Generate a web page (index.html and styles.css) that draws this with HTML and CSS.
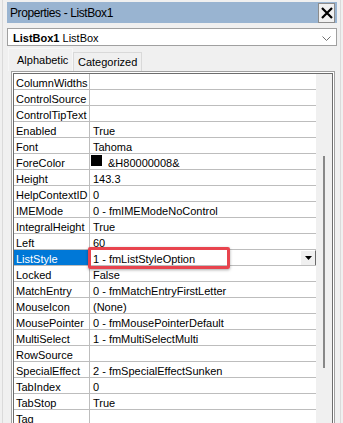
FILE: index.html
```html
<!DOCTYPE html>
<html lang="en">

<head>
    <meta charset="UTF-8">
    <meta name="viewport" content="width=device-width, initial-scale=1.0">
    <link rel="stylesheet" href="styles.css">
    <title>Properties - ListBox1</title>
</head>

<body>
    <div class="window">
        <div class="titlebar">
            <span class="title">Properties - ListBox1</span>
            <span class="close">
                <svg width="12" height="12" viewBox="0 0 12 12">
                    <path d="M1 1 L11 11 M11 1 L1 11" stroke="#000" stroke-width="2.2" fill="none" />
                </svg>
            </span>
        </div>

        <div class="combo">
            <span class="combo-text"><b>ListBox1</b> ListBox</span>
            <svg class="chevron" width="9" height="5" viewBox="0 0 9 5">
                <path d="M0.5 0.5 L4.5 4.5 L8.5 0.5" stroke="#707070" stroke-width="1" fill="none" />
            </svg>
        </div>

        <div class="tabs">
            <span class="tab active">Alphabetic</span>
            <span class="tab">Categorized</span>
        </div>

        <div class="grid">
            <div class="grid-inner">
                <div class="rows">
                    <div class="row"><span class="name">ColumnWidths</span><span class="value"></span></div>
                    <div class="row"><span class="name">ControlSource</span><span class="value"></span></div>
                    <div class="row"><span class="name">ControlTipText</span><span class="value"></span></div>
                    <div class="row"><span class="name">Enabled</span><span class="value">True</span></div>
                    <div class="row"><span class="name">Font</span><span class="value">Tahoma</span></div>
                    <div class="row"><span class="name">ForeColor</span><span class="value"><span class="swatch"></span>&amp;H80000008&amp;</span></div>
                    <div class="row"><span class="name">Height</span><span class="value">143.3</span></div>
                    <div class="row"><span class="name">HelpContextID</span><span class="value">0</span></div>
                    <div class="row"><span class="name">IMEMode</span><span class="value">0 - fmIMEModeNoControl</span></div>
                    <div class="row"><span class="name">IntegralHeight</span><span class="value">True</span></div>
                    <div class="row"><span class="name">Left</span><span class="value">60</span></div>
                    <div class="row selected">
                        <span class="name">ListStyle</span>
                        <span class="value">1 - fmListStyleOption
                            <span class="drop">
                                <svg width="7" height="4" viewBox="0 0 7 4"><path d="M0 0 L7 0 L3.5 4 Z" fill="#000" /></svg>
                            </span>
                        </span>
                    </div>
                    <div class="row"><span class="name">Locked</span><span class="value">False</span></div>
                    <div class="row"><span class="name">MatchEntry</span><span class="value">0 - fmMatchEntryFirstLetter</span></div>
                    <div class="row"><span class="name">MouseIcon</span><span class="value">(None)</span></div>
                    <div class="row"><span class="name">MousePointer</span><span class="value">0 - fmMousePointerDefault</span></div>
                    <div class="row"><span class="name">MultiSelect</span><span class="value">1 - fmMultiSelectMulti</span></div>
                    <div class="row"><span class="name">RowSource</span><span class="value"></span></div>
                    <div class="row"><span class="name">SpecialEffect</span><span class="value">2 - fmSpecialEffectSunken</span></div>
                    <div class="row"><span class="name">TabIndex</span><span class="value">0</span></div>
                    <div class="row"><span class="name">TabStop</span><span class="value">True</span></div>
                    <div class="row"><span class="name">Tag</span><span class="value"></span></div>

                    <div class="callout"></div>
                </div>
                <div class="scroll">
                    <div class="thumb"></div>
                </div>
            </div>
        </div>
    </div>
</body>

</html>
```

FILE: styles.css
```css
html,
body {
    margin: 0;
    padding: 0;
    height: 423px;
    overflow: hidden;
    background-color: #f0f0f0;
    font-family: 'Liberation Sans', Arial, sans-serif;
    font-size: 11px;
    color: #000;
}

.window {
    margin: 0 2px 0 2px;
    border-left: 1px solid #dadada;
    border-right: 1px solid #dadada;
    padding: 2px 3px 0 4px;
    height: 423px;
    box-sizing: border-box;
}

.titlebar {
    height: 21px;
    background-color: #99b4d1;
    display: flex;
    align-items: center;
    justify-content: space-between;
}

.title {
    font-size: 12px;
    letter-spacing: -0.4px;
    padding-left: 3px;
    padding-top: 1px;
}

.close {
    width: 15px;
    height: 18px;
    margin-right: 2px;
    background-color: #f0f0f0;
    border: 1px solid #8c8c8c;
    display: flex;
    align-items: center;
    justify-content: center;
}

.combo {
    margin-top: 5px;
    height: 18px;
    box-sizing: border-box;
    background-color: #fff;
    border: 1px solid #a0a0a0;
    display: flex;
    align-items: center;
    justify-content: space-between;
    padding: 0 5px 0 5px;
}

.combo-text {
    padding-top: 1px;
}

.chevron {
    margin-top: 2px;
}

.tabs {
    height: 25px;
    display: flex;
    align-items: flex-end;
    padding-left: 1px;
}

.tab {
    height: 19px;
    box-sizing: border-box;
    border: 1px solid #d9d9d9;
    border-bottom: none;
    padding: 3px 4px 0 4px;
}

.tab.active {
    height: 23px;
    width: 65px;
    border-color: #f7f7f7;
    padding: 5px 0 0 8px;
}

.grid {
    margin: 0 2px 0 4px;
    border: 1px solid #a0a0a0;
    padding: 1px;
    background-color: #fff;
}

.grid-inner {
    border: 1px solid #6d6d6d;
    display: flex;
    height: 400px;
    overflow: hidden;
}

.rows {
    flex: 1;
    position: relative;
    background-color: #fff;
}

.row {
    display: flex;
    height: 16px;
    box-sizing: border-box;
    border-bottom: 1px solid #bdbdbd;
}

.name,
.value {
    height: 15px;
    box-sizing: border-box;
    padding-top: 3px;
    line-height: 12px;
    white-space: nowrap;
    overflow: hidden;
}

.name {
    width: 76px;
    flex-shrink: 0;
    box-sizing: border-box;
    border-right: 1px solid #bdbdbd;
    padding-left: 2px;
}

.value {
    flex: 1;
    padding-left: 3px;
    display: flex;
    align-items: flex-start;
}

.selected .name {
    background-color: #0078d7;
    color: #fff;
}

.selected .value {
    position: relative;
}

.swatch {
    width: 11px;
    height: 11px;
    margin: -2px 6px 0 -2px;
    background-color: #000;
    flex-shrink: 0;
}

.drop {
    margin-left: auto;
    margin-top: -3px;
    width: 16px;
    height: 16px;
    box-sizing: border-box;
    background-color: #f0f0f0;
    border-top: 1px solid #fff;
    border-left: 1px solid #fff;
    border-right: 1px solid #696969;
    border-bottom: 1px solid #696969;
    display: flex;
    align-items: center;
    justify-content: center;
}

.callout {
    position: absolute;
    left: 74px;
    top: 173px;
    width: 142px;
    height: 22px;
    box-sizing: border-box;
    border: 3px solid #e8444e;
    border-radius: 2px;
    box-shadow: 0 1px 3px rgba(0, 0, 0, 0.35);
}

.scroll {
    width: 16px;
    flex-shrink: 0;
    background-color: #f0f0f0;
    padding-top: 82px;
    box-sizing: border-box;
}

.thumb {
    width: 2px;
    height: 212px;
    margin-left: 7px;
    background-color: #888;
}
```
